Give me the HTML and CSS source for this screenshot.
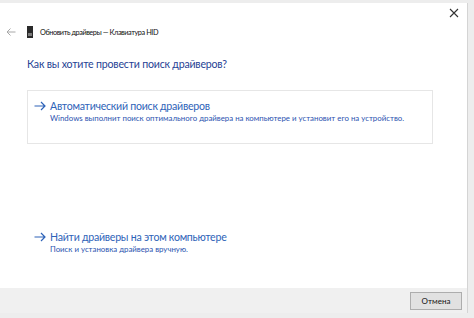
FILE: index.html
```html
<!DOCTYPE html>
<html lang="ru">
<head>
<meta charset="utf-8">
<link rel="stylesheet" href="styles.css">
</head>
<body>
<div class="screen">
  <div class="window">
    <div class="titlebar">
      <span class="close">
        <svg width="10" height="10" viewBox="0 0 10 10"><path d="M1 1L9 9M9 1L1 9" stroke="#333" stroke-width="1.1"/></svg>
      </span>
    </div>
    <div class="header">
      <svg class="back" width="10" height="8" viewBox="0 0 10 8"><path d="M9.5 4H1M4.5 0.5L1 4l3.5 3.5" fill="none" stroke="#a8a8a8" stroke-width="1"/></svg>
      <svg class="device" width="6" height="12" viewBox="0 0 6 12"><rect x="0" y="0" width="6" height="12" fill="#2a2a2a"/><rect x="1" y="7" width="4" height="3" fill="#7a7a7a"/></svg>
      <span class="title">Обновить драйверы — Клавиатура HID</span>
    </div>
    <div class="content">
      <h1 class="question">Как вы хотите провести поиск драйверов?</h1>
      <div class="option option-boxed">
        <div class="opt-head">
          <svg class="arrow" width="12" height="10" viewBox="0 0 12 10"><path d="M0.5 5H11M7 1l4 4-4 4" fill="none" stroke="#2e63b8" stroke-width="1.2"/></svg>
          <span class="opt-title">Автоматический поиск драйверов</span>
        </div>
        <div class="opt-desc">Windows выполнит поиск оптимального драйвера на компьютере и установит его на устройство.</div>
      </div>
      <div class="option option-plain">
        <div class="opt-head">
          <svg class="arrow" width="12" height="10" viewBox="0 0 12 10"><path d="M0.5 5H11M7 1l4 4-4 4" fill="none" stroke="#2e63b8" stroke-width="1.2"/></svg>
          <span class="opt-title">Найти драйверы на этом компьютере</span>
        </div>
        <div class="opt-desc">Поиск и установка драйвера вручную.</div>
      </div>
    </div>
    <div class="footer">
      <button class="cancel">Отмена</button>
    </div>
  </div>
</div>
</body>
</html>
```

FILE: styles.css
```css
* { box-sizing: border-box; }
html, body { margin: 0; padding: 0; }
body {
  width: 474px;
  height: 318px;
  overflow: hidden;
  background: #e9e9e9;
  font-family: "Lato", "Open Sans", sans-serif;
}
.screen {
  width: 474px;
  height: 318px;
  padding-top: 3px;
  padding-right: 6px;
  padding-bottom: 5px;
  background: #ededed;
}
.window {
  height: 100%;
  background: #fff;
  border-right: 1px solid #d4d4d4;
  display: flex;
  flex-direction: column;
}
.titlebar {
  height: 18px;
  display: flex;
  justify-content: flex-end;
  align-items: center;
  padding-right: 8px;
  padding-top: 2px;
}
.close { display: flex; }
.header {
  display: flex;
  align-items: center;
  height: 22px;
  padding-left: 6px;
}
.back { margin-right: 11px; }
.device { margin-right: 7px; }
.title {
  font-size: 7.3px;
  letter-spacing: -0.42px;
  color: #111;
}
.content {
  flex: 1;
  padding-left: 27px;
  padding-right: 34px;
}
.question {
  margin: 14px 0 0 0;
  font-size: 10.6px;
  letter-spacing: -0.2px;
  line-height: 14px;
  font-weight: 400;
  color: #1f3f94;
}
.option {
  padding: 7px 6px 0 6px;
}
.option-boxed {
  margin-top: 19px;
  height: 54px;
  border: 1px solid #e6e6e6;
}
.option-plain {
  margin-top: 77px;
  border: 1px solid transparent;
}
.opt-head {
  display: flex;
  align-items: center;
  height: 15px;
}
.arrow { margin-right: 4px; }
.opt-title {
  font-size: 10.6px;
  letter-spacing: -0.25px;
  color: #2e63b8;
}
.opt-desc {
  margin-left: 16px;
  margin-top: 0;
  font-size: 7.85px;
  color: #2b53b0;
}
.footer {
  height: 25px;
  background: #f0f0f0;
  display: flex;
  justify-content: flex-end;
  align-items: center;
  padding-right: 5px;
}
.cancel {
  width: 52px;
  height: 18px;
  border: 1px solid #adadad;
  background: #e1e1e1;
  font-family: "Lato", "Open Sans", sans-serif;
  font-size: 8px;
  color: #111;
  padding: 0;
}
```
